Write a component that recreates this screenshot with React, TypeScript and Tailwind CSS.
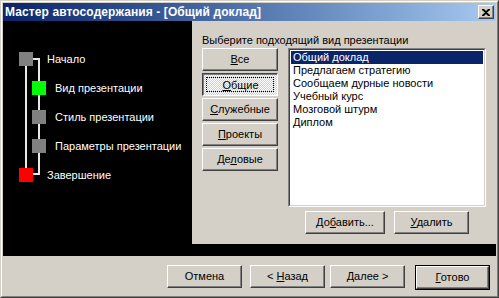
import React from 'react';

const raised =
  'border border-t-white border-l-white border-r-[#404040] border-b-[#404040] shadow-[inset_-1px_-1px_0_#808080,inset_1px_1px_0_#d4d0c8] bg-[#d4d0c8]';

const Btn = ({ children, w = 'w-[75px]' }: { children: React.ReactNode; w?: string }) => (
  <div className={`${w} h-[23px] ${raised} flex items-center justify-center text-black`}>{children}</div>
);

const steps = [
  { label: 'Начало', indent: false },
  { label: 'Вид презентации', indent: true },
  { label: 'Стиль презентации', indent: true },
  { label: 'Параметры презентации', indent: true },
  { label: 'Завершение', indent: false },
];

const items = [
  'Общий доклад',
  'Предлагаем стратегию',
  'Сообщаем дурные новости',
  'Учебный курс',
  'Мозговой штурм',
  'Диплом',
];

const App = () => {
  return (
    <div className="w-[499px] h-[298px] font-['Liberation_Sans',Arial,sans-serif] text-[11px] leading-[13px] border border-t-[#d4d0c8] border-l-[#d4d0c8] border-r-[#404040] border-b-[#404040] bg-[#d4d0c8]">
      <div className="h-full border border-t-white border-l-white border-r-[#808080] border-b-[#808080] p-px flex flex-col">
        {/* Title bar */}
        <div className="h-[18px] shrink-0 flex items-center justify-between pl-[2px] pr-[2px] bg-gradient-to-r from-[#0a246a] to-[#a6caf0]">
          <span className="text-white font-bold text-[12px] tracking-[0.1px]">Мастер автосодержания - [Общий доклад]</span>
          <div className={`w-[16px] h-[14px] ${raised} flex items-center justify-center`}>
            <svg width="8" height="7" viewBox="0 0 8 7">
              <path d="M0 0h2l2 2 2-2h2v1L5 3.5 8 6v1H6L4 5 2 7H0V6l3-2.5L0 1z" fill="#000" />
            </svg>
          </div>
        </div>

        {/* Main */}
        <div className="h-[223px] shrink-0 flex">
          {/* Steps diagram */}
          <div className="w-[189px] shrink-0 bg-black relative">
            <svg className="absolute left-0 top-0" width="60" height="200">
              <line x1="23" y1="44" x2="23" y2="147" stroke="#e8e8e8" strokeWidth="2" />
              <polyline points="30,38 36,38 36,153 30,153" fill="none" stroke="#e8e8e8" strokeWidth="2" />
              <rect x="16" y="31" width="14" height="14" fill="#808080" />
              <rect x="29" y="60" width="14" height="14" fill="#00ff00" />
              <rect x="29" y="89" width="14" height="14" fill="#808080" />
              <rect x="29" y="118" width="14" height="14" fill="#808080" />
              <rect x="16" y="147" width="14" height="14" fill="#ff0000" />
            </svg>
            <div className="relative pt-[31px] flex flex-col gap-[15px] text-white text-[11px] leading-[14px] whitespace-nowrap">
              {steps.map((s) => (
                <div key={s.label} className={s.indent ? 'pl-[52px]' : 'pl-[44px]'}>
                  {s.label}
                </div>
              ))}
            </div>
          </div>

          {/* Right panel */}
          <div className="flex-1 pl-[10px] pt-[13px]">
            <div className="text-black">Выберите подходящий вид презентации</div>
            <div className="mt-px flex gap-[10px]">
              <div className="w-[76px] flex flex-col gap-[2px]">
                <Btn w="w-[76px]"><span><u>В</u>се</span></Btn>
                <div className="w-[76px] h-[23px] border border-t-[#404040] border-l-[#404040] border-r-white border-b-white shadow-[inset_1px_1px_0_#808080] bg-[repeating-conic-gradient(#ffffff_0_25%,#d4d0c8_0_50%)] bg-[length:2px_2px] p-[3px]">
                  <div className="h-full border border-dotted border-black flex items-center justify-center pt-px pl-px">
                    <span><u>О</u>бщие</span>
                  </div>
                </div>
                <Btn w="w-[76px]"><span><u>С</u>лужебные</span></Btn>
                <Btn w="w-[76px]"><span><u>П</u>роекты</span></Btn>
                <Btn w="w-[76px]"><span>Де<u>л</u>овые</span></Btn>
              </div>
              <div className="w-[198px] flex flex-col">
                <div className="h-[159px] border border-t-[#808080] border-l-[#808080] border-r-white border-b-white">
                  <div className="h-full border border-t-[#404040] border-l-[#404040] border-r-[#d4d0c8] border-b-[#d4d0c8] bg-white p-px">
                    {items.map((it, i) => (
                      <div
                        key={it}
                        className={`h-[13px] pl-[2px] ${i === 0 ? 'bg-[#0a246a] text-white' : 'text-black'}`}
                      >
                        {it}
                      </div>
                    ))}
                  </div>
                </div>
                <div className="mt-[4px] flex justify-end gap-[9px] pr-[17px]">
                  <Btn w="w-[80px]"><span>До<u>б</u>авить...</span></Btn>
                  <Btn><span><u>У</u>далить</span></Btn>
                </div>
              </div>
            </div>
          </div>
        </div>

        {/* Black strip */}
        <div className="h-[12px] shrink-0 bg-black" />

        {/* Bottom buttons */}
        <div className="flex-1 flex justify-end items-start pt-[9px] pr-[6px]">
          <Btn><span>Отмена</span></Btn>
          <div className="ml-[8px]">
            <Btn><span>&lt; <u>Н</u>азад</span></Btn>
          </div>
          <div className="ml-[5px]">
            <Btn><span><u>Д</u>алее &gt;</span></Btn>
          </div>
          <div className="ml-[10px] border border-black">
            <Btn w="w-[73px]"><span><u>Г</u>отово</span></Btn>
          </div>
        </div>
      </div>
    </div>
  );
};

export default App;
